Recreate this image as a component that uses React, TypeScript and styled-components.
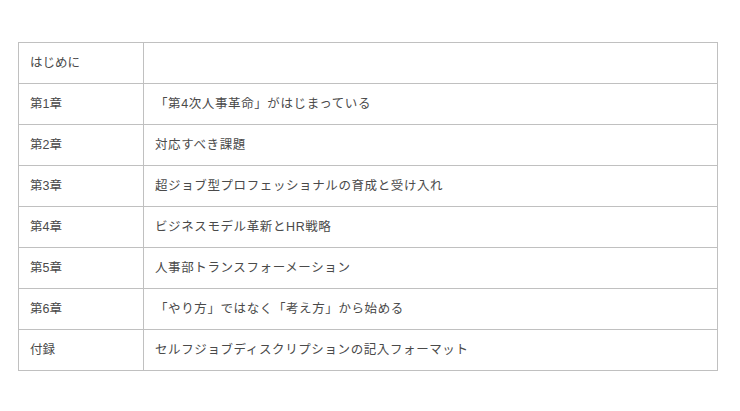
import { Fragment } from 'react';
import styled, { createGlobalStyle } from 'styled-components';

const GlobalStyle = createGlobalStyle`
  html, body {
    margin: 0;
    padding: 0;
    background: #fff;
  }
  body {
    font-family: 'Liberation Sans', 'Noto Sans CJK JP', sans-serif;
  }
`;

const Page = styled.div`
  padding: 42px 0 0 18px;
`;

const TocTable = styled.div`
  display: grid;
  grid-template-columns: 125px 1fr;
  width: 700px;
  border-top: 1px solid #c0c0c0;
  border-left: 1px solid #c0c0c0;
  box-sizing: border-box;
`;

const Cell = styled.div<{ $wide?: boolean }>`
  display: flex;
  align-items: center;
  height: 41px;
  box-sizing: border-box;
  padding: 0 11px;
  border-right: 1px solid #c0c0c0;
  border-bottom: 1px solid #c0c0c0;
  color: #4a4a4a;
  font-family: 'Liberation Sans', 'Noto Sans CJK JP', sans-serif;
  font-size: 12.5px;
  line-height: 18px;
  letter-spacing: ${(p) => (p.$wide ? '0.6px' : '0')};
  white-space: nowrap;
`;

const chapters: [string, string][] = [
  ['はじめに', ''],
  ['第1章', '「第4次人事革命」がはじまっている'],
  ['第2章', '対応すべき課題'],
  ['第3章', '超ジョブ型プロフェッショナルの育成と受け入れ'],
  ['第4章', 'ビジネスモデル革新とHR戦略'],
  ['第5章', '人事部トランスフォーメーション'],
  ['第6章', '「やり方」ではなく「考え方」から始める'],
  ['付録', 'セルフジョブディスクリプションの記入フォーマット'],
];

export default function App() {
  return (
    <>
      <GlobalStyle />
      <Page>
        <TocTable>
          {chapters.map(([label, title]) => (
            <Fragment key={label}>
              <Cell>{label}</Cell>
              <Cell $wide>{title}</Cell>
            </Fragment>
          ))}
        </TocTable>
      </Page>
    </>
  );
}
